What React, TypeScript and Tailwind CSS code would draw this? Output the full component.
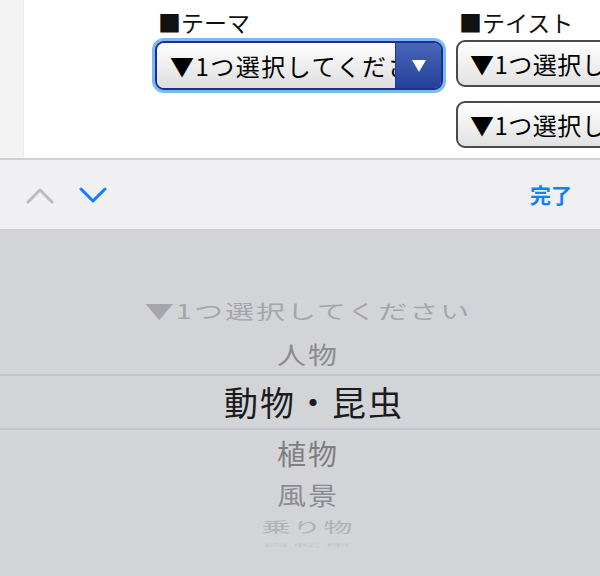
const jp = { fontFamily: '"Noto Sans CJK JP", "Noto Sans", sans-serif' };

function Chevron({ up, color }: { up?: boolean; color: string }) {
  return (
    <svg width="28" height="20" viewBox="0 0 28 20" fill="none">
      <path
        d={up ? "M2 17 L14 5 L26 17" : "M2 4 L14 16 L26 4"}
        stroke={color}
        strokeWidth="3"
        strokeLinecap="round"
        strokeLinejoin="round"
      />
    </svg>
  );
}

function PlainSelect() {
  return (
    <div className="h-[47px] w-[170px] rounded-[9px] border-2 border-[#4a4a4a] bg-gradient-to-b from-white to-[#e2e2e2] overflow-hidden flex items-center pl-[12px] whitespace-nowrap">
      <span className="text-[24px] text-black leading-none tracking-[0.5px]">▼1つ選択してください</span>
    </div>
  );
}

const rows = [
  { t: "▼1つ選択してください", h: "h-[44px]", c: "text-[#a6a6aa]", s: "scale-y-[0.68]" },
  { t: "人物", h: "h-[42px]", c: "text-[#8c8c90]", s: "scale-y-[0.84]" },
  { t: "植物", h: "h-[44px]", c: "text-[#7f7f83]", s: "scale-y-[0.98]" },
  { t: "風景", h: "h-[40px]", c: "text-[#8c8c90]", s: "scale-y-[0.86]" },
  { t: "乗り物", h: "h-[24px]", c: "text-[#b2b2b6]", s: "scale-y-[0.48]" },
  { t: "自転車", h: "h-[14px]", c: "text-[#c6c6ca]", s: "scale-y-[0.14]" },
];

function Row({ r }: { r: (typeof rows)[number] }) {
  return (
    <div className={`${r.h} flex items-center justify-center overflow-visible`}>
      <span className={`text-[29px] leading-none tracking-[2px] ${r.c} ${r.s} inline-block whitespace-nowrap`}>
        {r.t}
      </span>
    </div>
  );
}

export default function App() {
  return (
    <div className="w-[600px] h-[576px] overflow-hidden bg-[#d3d4d8] flex flex-col" style={jp}>
      {/* page behind the picker */}
      <div className="h-[160px] flex bg-white border-b-2 border-[#d0d0d4] overflow-hidden shrink-0">
        <div className="w-[24px] bg-[#f3f3f3] border-r border-[#ececec] shrink-0" />
        <div className="flex gap-[10px] pl-[128px] pt-[7px]">
          <div className="flex flex-col w-[294px] shrink-0">
            <div className="h-[31px] pl-[6px] text-[23px] leading-[31px] text-[#111]">■テーマ</div>
            <div className="h-[55px] rounded-[12px] bg-[#7cb9f4] p-[3px]">
              <div className="h-full rounded-[9px] border-2 border-[#1c2f8c] overflow-hidden flex">
                <div className="flex-1 bg-gradient-to-b from-white to-[#dedede] flex items-center pl-[13px] overflow-hidden whitespace-nowrap">
                  <span className="text-[24px] text-black leading-none tracking-[1.5px]">▼1つ選択してください</span>
                </div>
                <div className="w-[46px] bg-gradient-to-b from-[#4a66b8] to-[#24409b] flex items-center justify-center border-l border-[#22378f]">
                  <svg width="16" height="14" viewBox="0 0 16 14">
                    <path d="M1 1 H15 L8 13 Z" fill="white" />
                  </svg>
                </div>
              </div>
            </div>
          </div>
          <div className="flex flex-col shrink-0">
            <div className="h-[31px] pl-[3px] text-[23px] leading-[31px] text-[#111] whitespace-nowrap">■テイスト</div>
            <div className="pt-[2px]">
              <PlainSelect />
            </div>
            <div className="pt-[14px]">
              <PlainSelect />
            </div>
          </div>
        </div>
      </div>

      {/* keyboard toolbar */}
      <div className="h-[70px] bg-[#f0f0f3] border-b border-[#cfd0d4] flex items-center px-[26px] shrink-0">
        <div className="flex items-center gap-[25px] pt-[1px]">
          <Chevron up color="#bcbcc0" />
          <Chevron color="#157efb" />
        </div>
        <div className="flex-1" />
        <span className="text-[21px] font-bold text-[#157efb] pr-[2px]">完了</span>
      </div>

      {/* picker wheel */}
      <div className="flex flex-col pt-[58px] pl-[16px]">
        <Row r={rows[0]} />
        <Row r={rows[1]} />
        <div className="h-[56px] -mx-[16px] border-y-2 border-[#c4c5ca] flex items-center justify-center pl-[12px]">
          <span className="text-[34px] leading-none tracking-[2px] text-[#1c1c1e] whitespace-nowrap">動物・昆虫</span>
        </div>
        <Row r={rows[2]} />
        <Row r={rows[3]} />
        <Row r={rows[4]} />
        <Row r={rows[5]} />
      </div>
    </div>
  );
}
